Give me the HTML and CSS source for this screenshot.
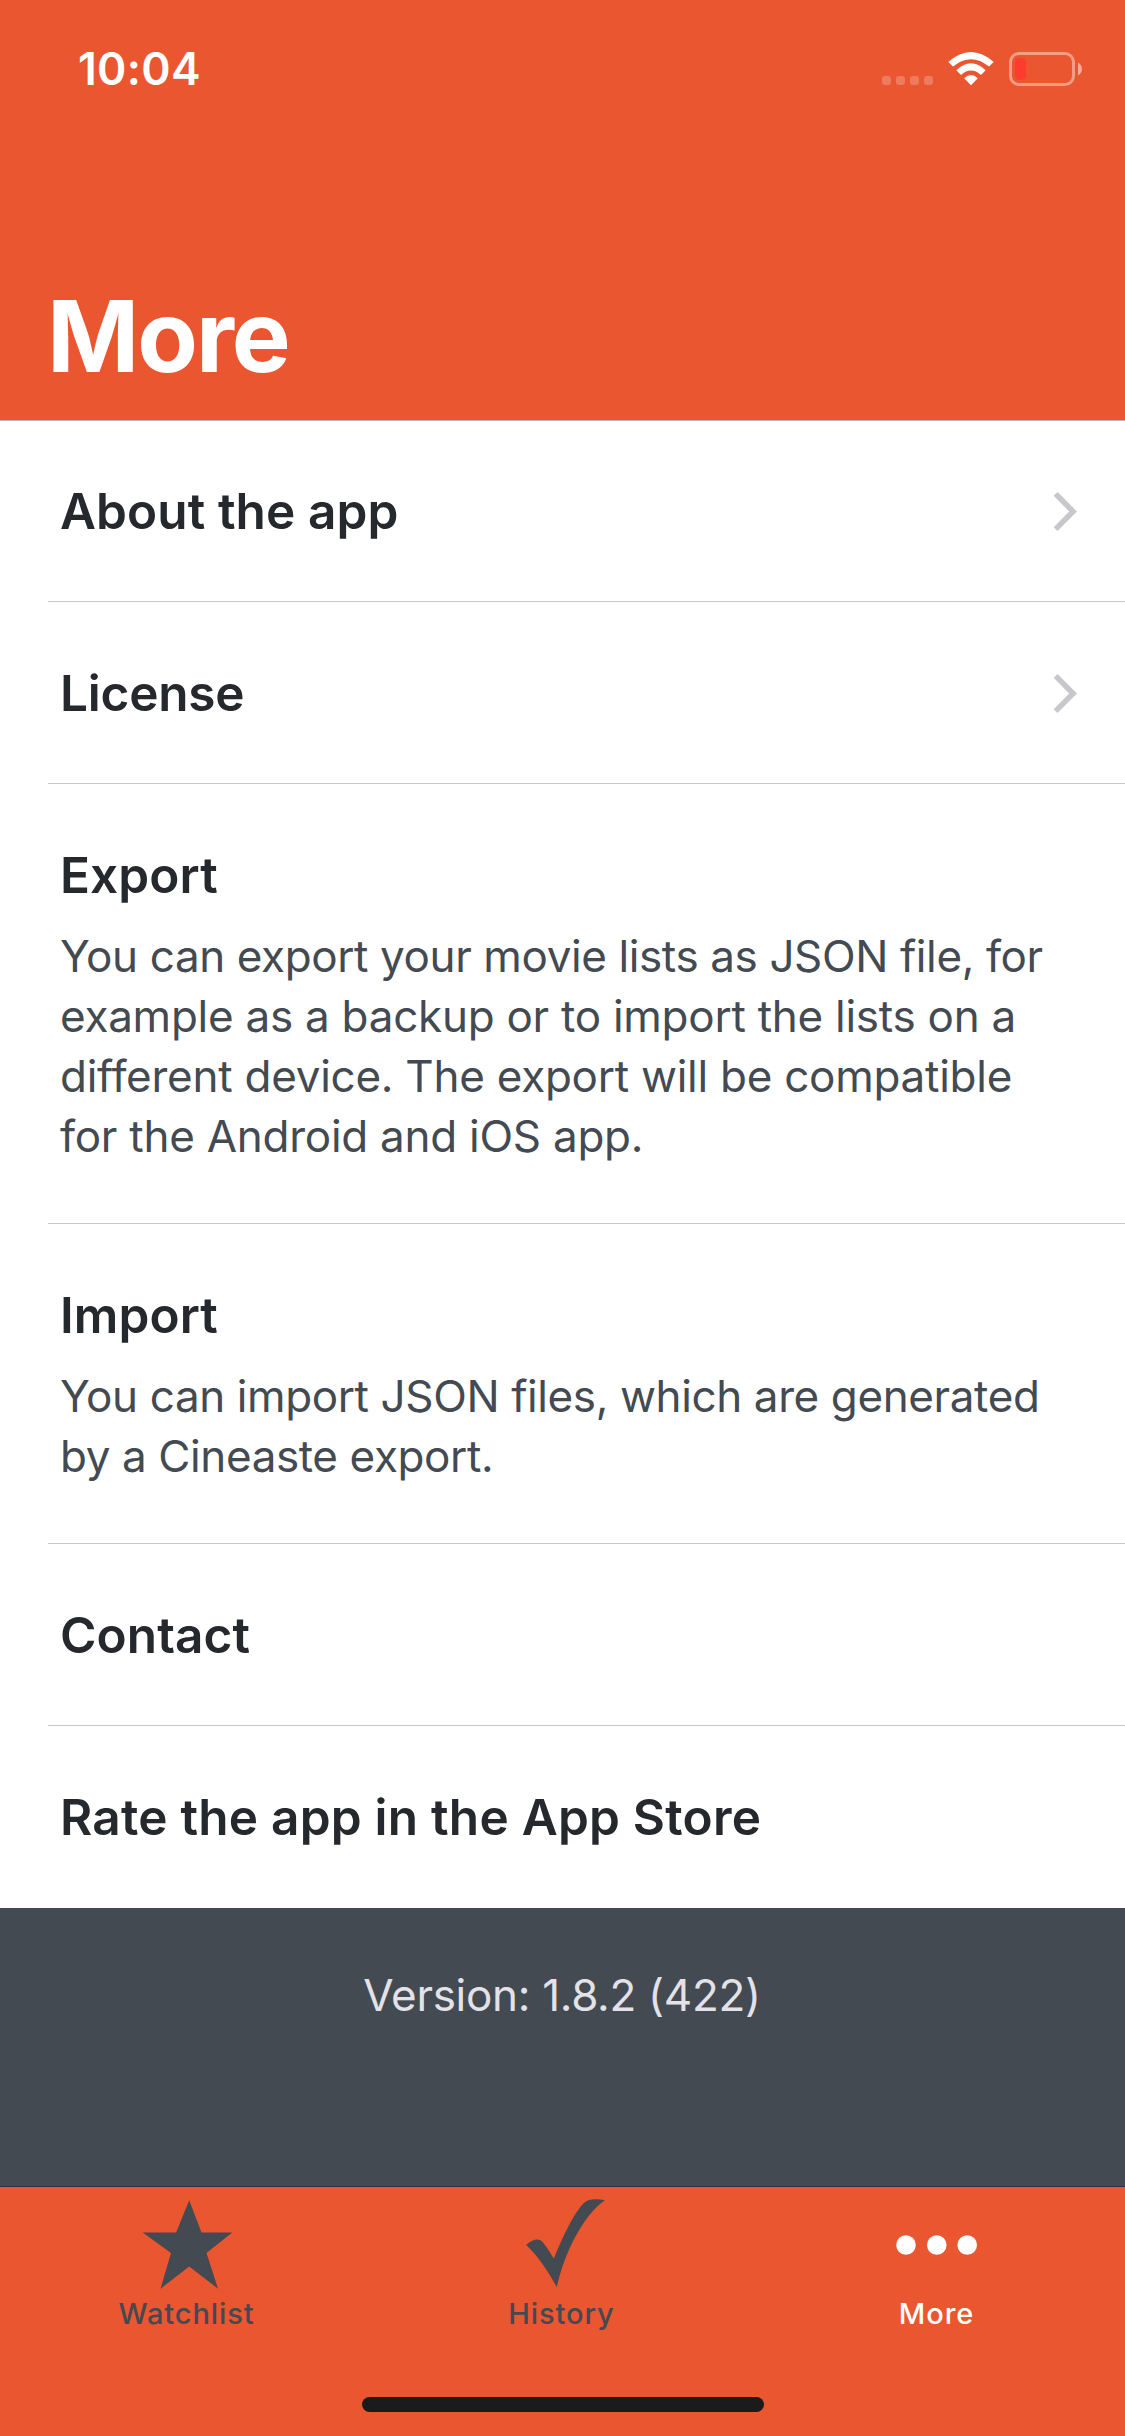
FILE: index.html
```html
<!DOCTYPE html>
<html lang="en">
<head>
<meta charset="utf-8">
<title>More</title>
<link rel="stylesheet" href="styles.css">
</head>
<body>
<div class="screen">
  <header class="header">
    <div class="status">
      <span class="time">10:04</span>
      <svg class="indicators" width="204" height="40" viewBox="880 48 204 40">
        <g fill="#fff" fill-opacity=".22">
          <rect x="882" y="76" width="9" height="9" rx="3"/>
          <rect x="896" y="76" width="9" height="9" rx="3"/>
          <rect x="910" y="76" width="9" height="9" rx="3"/>
          <rect x="924" y="76" width="9" height="9" rx="3"/>
        </g>
        <g fill="#fff">
          <path d="M948.3 62 Q971 42 993.7 62 L989 66.6 Q971 51.8 953 66.6 Z"/>
          <path d="M956.3 70.2 Q971 56.2 985.7 70.2 L981 75 Q971 66.2 961 75 Z"/>
          <path d="M964.2 78.2 Q971 71.6 977.8 78.2 L971 85.2 Z"/>
        </g>
        <rect x="1010.5" y="53.5" width="63" height="31" rx="8.5" fill="none" stroke="#fff" stroke-opacity=".42" stroke-width="3"/>
        <rect x="1015" y="58" width="11" height="22" rx="4.5" fill="#ff3b30"/>
        <path d="M1078 62.5 C1083.3 65 1083.3 73 1078 75.5 Z" fill="#fff" fill-opacity=".5"/>
      </svg>
    </div>
    <h1 class="title">More</h1>
  </header>

  <main class="list">
    <section class="row">
      <h2 class="label">About the app</h2>
      <svg class="chevron" width="26" height="42" viewBox="0 0 26 42"><path d="M3.6 3.9 21.1 21.5 3.6 39.1"/></svg>
    </section>
    <section class="row">
      <h2 class="label label-tight">License</h2>
      <svg class="chevron" width="26" height="42" viewBox="0 0 26 42"><path d="M3.6 3.9 21.1 21.5 3.6 39.1"/></svg>
    </section>
    <section class="row row-text">
      <h2 class="label">Export</h2>
      <p class="description">
        <span class="line">You can export your movie lists as JSON file, for</span>
        <span class="line line-loose">example as a backup or to import the lists on a</span>
        <span class="line line-loose">different device. The export will be compatible</span>
        <span class="line line-loose">for the Android and iOS app.</span>
      </p>
    </section>
    <section class="row row-text">
      <h2 class="label">Import</h2>
      <p class="description">
        <span class="line">You can import JSON files, which are generated</span>
        <span class="line">by a Cineaste export.</span>
      </p>
    </section>
    <section class="row"><h2 class="label">Contact</h2></section>
    <section class="row"><h2 class="label label-loose">Rate the app in the App Store</h2></section>
  </main>

  <footer class="version">Version: 1.8.2 (422)</footer>

  <nav class="tabbar">
    <div class="tabs">
      <a class="tab">
        <svg width="100" height="104" viewBox="137.500 2190 100 104" fill="currentColor"><path d="M188.7 2200.3 201 2232.4H231.7L206 2253 217.5 2288.7 188.7 2266.6 160 2288.7 170.5 2253 142.2 2232.4H175.6Z"/></svg>
        <span class="tab-label">Watchlist</span>
      </a>
      <a class="tab">
        <svg width="100" height="104" viewBox="512.5 2190 100 104" fill="currentColor"><path d="M525.7 2245C530 2241 534 2239.3 537 2239.4C540.5 2239.6 542 2241.5 544 2244.4C547.5 2249 550.5 2254 553.3 2258.6C560 2242 569 2222 578 2209.5C583 2202.5 586.5 2200 591.5 2199.6C595 2199.2 600 2199.2 604.3 2200.2C582 2216 564 2253 556.3 2287C547 2270.5 538 2256.5 525.7 2245Z"/></svg>
        <span class="tab-label">History</span>
      </a>
      <a class="tab tab-active">
        <svg width="100" height="104" viewBox="888 2190 100 104" fill="currentColor"><circle cx="906" cy="2245" r="9.8"/><circle cx="936.8" cy="2245" r="9.8"/><circle cx="967.2" cy="2245" r="9.8"/></svg>
        <span class="tab-label">More</span>
      </a>
    </div>
    <div class="home-indicator"></div>
  </nav>
</div>
</body>
</html>
```
FILE: styles.css
```css
* { box-sizing: border-box; margin: 0; padding: 0; }

body {
  font-family: Inter, "Liberation Sans", sans-serif;
  background: #434a51;
}

.screen {
  width: 1125px;
  height: 2436px;
  display: flex;
  flex-direction: column;
  overflow: hidden;
}

.header {
  height: 421px;
  padding: 0 42px 26px 47px;
  display: flex;
  flex-direction: column;
  justify-content: space-between;
  background: #e95630;
  border-bottom: 1px solid #b5b4b8;
  color: #fff;
}

.status {
  display: flex;
  justify-content: space-between;
  padding: 39px 0 0 31px;
}

.time {
  font-size: 44.5px;
  font-weight: 600;
  line-height: 60px;
  letter-spacing: .3px;
}

.indicators { margin: 9px -1px 0 0; }

.title {
  font-size: 99px;
  font-weight: 700;
  line-height: 116px;
  letter-spacing: -2px;
}

.list { background: #fff; }

.row {
  height: 182px;
  margin-left: 48px;
  padding: 0 47px 0 12px;
  display: flex;
  align-items: center;
  justify-content: space-between;
  border-bottom: 1px solid #c8c7cc;
}

.row:first-child { height: 181px; }
.row:last-child { border-bottom-color: transparent; }

.row-text {
  height: auto;
  display: block;
  padding: 61px 47px 57px 12px;
}

.label {
  font-size: 49.5px;
  font-weight: 600;
  line-height: 60px;
  letter-spacing: .1px;
  color: #25282d;
}

.label-tight { letter-spacing: -.2px; }
.label-loose { letter-spacing: .24px; }

.chevron {
  fill: none;
  stroke: #c7c7cc;
  stroke-width: 5.5;
}

.description {
  margin-top: 21px;
  font-size: 44px;
  line-height: 60px;
  letter-spacing: -.39px;
  color: #434a51;
}

.line { display: block; white-space: nowrap; }
.line-loose { letter-spacing: -.26px; }

.version {
  height: 279px;
  padding: 57px 1px 0 0;
  border-bottom: 1px solid #2c3439;
  background: #434a51;
  color: #e2e2e8;
  font-size: 44px;
  line-height: 60px;
  letter-spacing: -.3px;
  text-align: center;
}

.tabbar {
  flex: 1;
  display: flex;
  flex-direction: column;
  justify-content: space-between;
  align-items: center;
  padding: 3px 0 24px;
  background: #e95630;
}

.tabs {
  width: 100%;
  display: grid;
  grid-template-columns: repeat(3, 1fr);
}

.tab {
  display: flex;
  flex-direction: column;
  align-items: center;
  gap: 2px;
  color: #434a51;
  font-size: 29px;
  font-weight: 500;
  line-height: 36px;
  letter-spacing: .9px;
}

.tab-label { padding-right: 2px; }

.tab-active { color: #fff; }

.home-indicator {
  width: 402px;
  height: 15px;
  border-radius: 8px;
  background: #1b1b1b;
}
```
